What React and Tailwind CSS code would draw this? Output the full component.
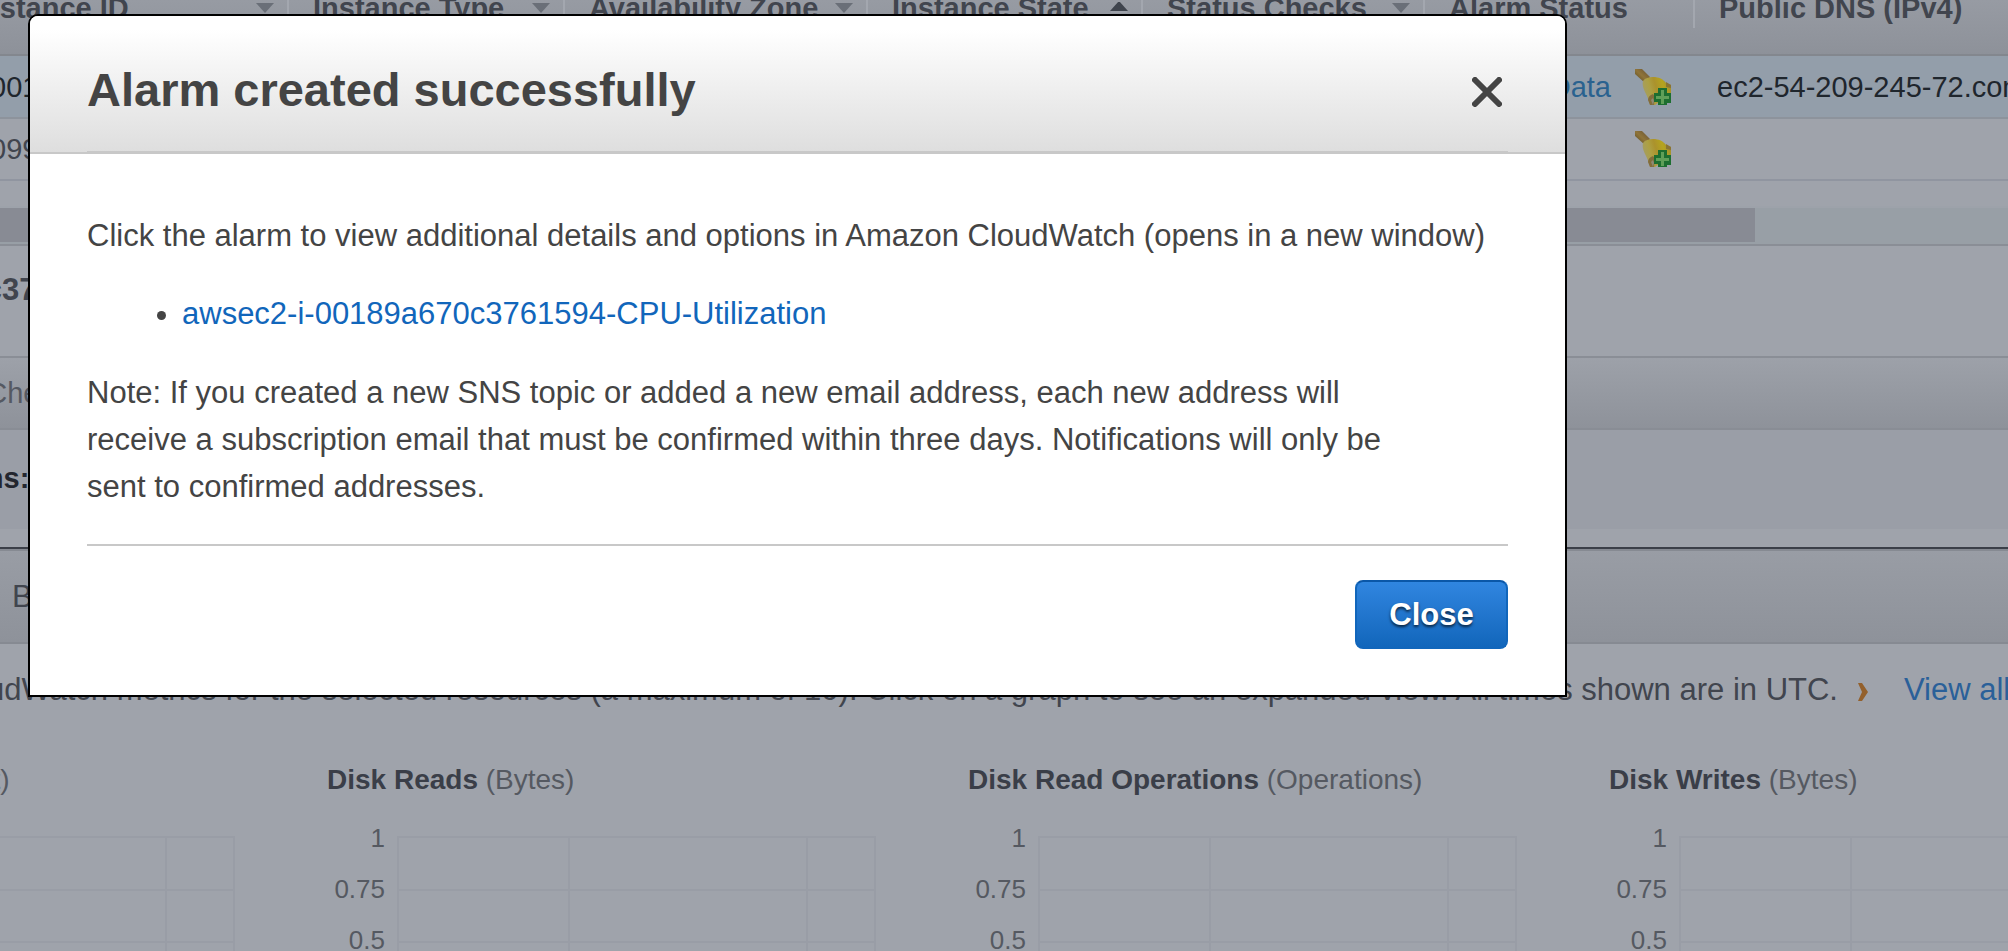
import React from "react";

const columns = [
  { name: "Instance ID", width: "w-[339px]", sort: "down" },
  { name: "Instance Type", width: "w-[276px]", sort: "down" },
  { name: "Availability Zone", width: "w-[303px]", sort: "down" },
  { name: "Instance State", width: "w-[275px]", sort: "up" },
  { name: "Status Checks", width: "w-[282px]", sort: "down" },
  { name: "Alarm Status", width: "w-[270px]", sort: null },
  { name: "Public DNS (IPv4)", width: "w-[560px]", sort: null },
];

const charts = [
  { name: "CPU Utilization", unit: "(Percent)" },
  { name: "Disk Reads", unit: "(Bytes)" },
  { name: "Disk Read Operations", unit: "(Operations)" },
  { name: "Disk Writes", unit: "(Bytes)" },
];

function SortArrow({ direction }) {
  if (direction === "up") {
    return (
      <svg viewBox="0 0 18 11" className="w-[18px] h-[11px]" aria-hidden="true">
        <path d="M0 9 9 -1l9 10z" fill="#3f444d" />
        <path d="M1 10h16" stroke="#a3a7af" strokeWidth="1" />
      </svg>
    );
  }
  return (
    <svg viewBox="0 0 18 11" className="w-[18px] h-[11px]" aria-hidden="true">
      <path d="M0 1h18L9 11z" fill="#6a6f78" />
    </svg>
  );
}

function AlarmBell() {
  return (
    <svg viewBox="0 0 36 36" className="size-9 shrink-0" aria-hidden="true">
      <defs>
        <linearGradient id="bell" x1="0" y1="0.6" x2="1" y2="0.3">
          <stop offset="0" stopColor="#a39d68" />
          <stop offset="0.3" stopColor="#ada042" />
          <stop offset="0.5" stopColor="#ab922c" />
          <stop offset="0.75" stopColor="#b5a41f" />
          <stop offset="1" stopColor="#a08c30" />
        </linearGradient>
        <linearGradient id="handle" x1="0" y1="1" x2="1" y2="0">
          <stop offset="0.3" stopColor="#75602f" />
          <stop offset="0.5" stopColor="#8f7439" />
          <stop offset="0.7" stopColor="#7d6537" />
        </linearGradient>
      </defs>
      <path d="M0 0h7l8 8-5 6L0 5z" fill="url(#handle)" />
      <path
        d="M8 12c2-3 6-4 10-4 6 0 10 2 13 6l5 2v8L20 36h-5c-1-5-3-9-5-13-2-4-3-8-2-11z"
        fill="url(#bell)"
      />
      <path d="M31 13l5 3v3l-5-1z" fill="#8a7433" />
      <path d="M13 31c0-3 2-5 5-6l2 3-1 8h-4z" fill="#836d3b" />
      <path d="M16 31l2-2 1 3-1 4z" fill="#8f8a74" />
      <path d="M23 19h9v5h4v10h-4v2h-9v-3h-4v-9h4z" fill="#1d6e30" />
      <path d="M26 21h3v6h5v3h-5v5h-3v-5h-5v-3h5z" fill="#5f9f58" />
    </svg>
  );
}

function InstanceTable() {
  return (
    <table className="-ml-[50px] w-[2305px] table-fixed border-separate border-spacing-0 text-[29px] text-[#41454e]">
      <thead>
        <tr className="h-14 bg-linear-to-b from-[#979ba3] to-[#8d9199]">
          {columns.map((c) => (
            <th
              key={c.name}
              scope="col"
              className={`${c.width} border-b-2 border-[#83878e] p-0 align-top text-left font-bold`}
            >
              <div className="flex h-7 items-start justify-between border-r-2 border-[#a3a7af] pl-6 pr-[13px] whitespace-nowrap">
                <span className="leading-4">{c.name}</span>
                {c.sort && (
                  <span className="pt-[2px] leading-none">
                    <SortArrow direction={c.sort} />
                  </span>
                )}
              </div>
            </th>
          ))}
        </tr>
      </thead>
      <tbody>
        <tr className="h-[63px] bg-[#939eaa] text-[#1f262d]">
          <td className="border-b-2 border-[#8d939c] pt-[2px] pb-0 pl-6">i-00189</td>
          <td className="border-b-2 border-[#8d939c] p-0" colSpan={4}></td>
          <td className="border-b-2 border-[#8d939c] p-0">
            <div className="flex items-center justify-end gap-6 pr-6">
              <a href="#no-data" className="pt-[2px] text-[#2a628f]">No Data</a>
              <AlarmBell />
            </div>
          </td>
          <td className="border-b-2 border-[#8d939c] pt-[2px] pb-0 pl-[22px]">
            ec2-54-209-245-72.compute-1
          </td>
        </tr>
        <tr className="h-[62px]">
          <td className="border-b-2 border-[#9095a0] pt-[2px] pb-0 pl-6">i-0996</td>
          <td className="border-b-2 border-[#9095a0] p-0" colSpan={4}></td>
          <td className="border-b-2 border-[#9095a0] p-0">
            <div className="flex items-center justify-end gap-6 pr-6">
              <AlarmBell />
            </div>
          </td>
          <td className="border-b-2 border-[#9095a0] p-0"></td>
        </tr>
      </tbody>
    </table>
  );
}

function ChartCard({ name, unit }) {
  return (
    <section className="w-[641px] shrink-0">
      <h3 className="text-[28px] leading-8 font-bold text-[#3a3e48] whitespace-nowrap">
        {name} <span className="font-normal text-[#555961]">{unit}</span>
      </h3>
      <div className="mt-[17px] flex">
        <div className="flex w-[58px] flex-col text-right text-[26px] leading-[51px] text-[#555961]">
          <span>1</span>
          <span>0.75</span>
          <span>0.5</span>
          <span>0.25</span>
        </div>
        <svg viewBox="0 0 480 200" className="mt-[21px] ml-[11px] w-[480px] h-[200px]" aria-hidden="true">
          <path
            d="M1 3H480M1 56H480M1 108H480M1 160H480M2 2V200M173 2V200M411 2V200M479 2V200"
            stroke="#999da6"
            strokeWidth="2"
            fill="none"
          />
        </svg>
      </div>
    </section>
  );
}

function Console() {
  return (
    <main className="h-screen overflow-hidden bg-[#9fa3ab] text-[#41454e]">
      <InstanceTable />
      <div className="mt-[25px] h-[38px] border-t-2 border-[#9da2aa] bg-[#989fa6]">
        <div className="h-[34px] w-[1755px] bg-[#888b94]"></div>
      </div>
      <div className="flex h-[114px] items-start border-y-2 border-[#8a8e96] pt-6">
        <h2 className="-ml-[334px] text-[31px] leading-10 font-bold whitespace-nowrap">
          Instance: i-00189a670c3761594
        </h2>
      </div>
      <nav className="flex h-[72px] items-center border-b-2 border-[#898d95] bg-linear-to-b from-[#9da1a9] to-[#8e929a] pt-[2px]">
        <a href="#status" className="-ml-[104px] text-[29px] text-[#555962] whitespace-nowrap">
          Status Checks
        </a>
      </nav>
      <div className="h-[99px] bg-[#9a9ea7] pt-7">
        <p className="-ml-[250px] text-[29px] leading-[40px] font-bold text-[#23262f] whitespace-nowrap">
          CloudWatch alarms:
        </p>
      </div>
      <div className="mt-[18px] flex h-[97px] items-center border-t-2 border-b-2 border-t-[#3b3f48] border-b-[#868a92] bg-linear-to-b from-[#999da5] to-[#8e929a] pt-1 pl-3 shadow-[inset_0_2px_0_#868a92]">
        <p className="text-[31px]">Basic monitoring</p>
      </div>
      <div className="-ml-[275px] flex items-center pt-[22px] text-[31px] leading-[47px] whitespace-nowrap">
        <p>
          Below are your CloudWatch metrics for the selected resources (a maximum of 10). Click on a
          graph to see an expanded view. All times shown are in UTC.
        </p>
        <svg viewBox="0 0 10 18" className="mt-1 ml-5 h-[18px] w-[10px] shrink-0" aria-hidden="true">
          <path d="M0 0h4l6 9-6 9H0l4-9z" fill="#93602c" />
        </svg>
        <a href="#metrics" className="ml-9 text-[#2a6099]">
          View all CloudWatch metrics
        </a>
      </div>
      <div className="-ml-[314px] flex pt-[51px]">
        {charts.map((c) => (
          <ChartCard key={c.name} name={c.name} unit={c.unit} />
        ))}
      </div>
    </main>
  );
}

function AlarmDialog() {
  return (
    <div className="fixed inset-0 flex items-start pt-[14px] pr-7 pl-7">
      <div
        role="dialog"
        aria-labelledby="dialog-title"
        className="w-full max-w-[1539px] overflow-hidden rounded-t-[10px] border-2 border-black bg-white text-[31px] leading-[47px] text-[#444]"
      >
        <header className="border-b-2 border-[#c8c8c8] bg-linear-to-b from-white from-10% to-[#dedede] px-[57px]">
          <div className="-mb-px flex h-[137px] items-center justify-between border-b-2 border-[#c8c8c8] pt-3 pr-[6px]">
            <h1 id="dialog-title" className="text-[47px] font-bold">
              Alarm created successfully
            </h1>
            <button type="button" aria-label="Close dialog" className="pt-1">
              <svg viewBox="0 0 30 30" className="size-[30px]" aria-hidden="true">
                <path
                  d="M3 3l24 24M27 3 3 27"
                  stroke="#444"
                  strokeWidth="6"
                  strokeLinecap="round"
                />
              </svg>
            </button>
          </div>
        </header>
        <div className="px-[57px] pt-[58px] pb-[46px]">
          <p>
            Click the alarm to view additional details and options in Amazon CloudWatch (opens in a
            new window)
          </p>
          <ul className="mt-[31px] mb-8 list-disc pl-[95px]">
            <li>
              <a href="#alarm" className="text-[#1166bb]">
                awsec2-i-00189a670c3761594-CPU-Utilization
              </a>
            </li>
          </ul>
          <p className="max-w-[1340px]">
            Note: If you created a new SNS topic or added a new email address, each new address will
            receive a subscription email that must be confirmed within three days. Notifications
            will only be sent to confirmed addresses.
          </p>
          <div className="mt-[34px] flex justify-end border-t-2 border-[#c8c8c8] pt-[34px]">
            <button
              type="button"
              className="h-[69px] w-[153px] rounded-lg border-2 border-[#1166bb] border-t-[#0a57a8] bg-linear-to-b from-[#3086e0] to-[#1166bb] text-[31px] font-bold text-white text-shadow-[0_2px_3px_rgba(0,0,0,0.7)]"
            >
              Close
            </button>
          </div>
        </div>
      </div>
    </div>
  );
}

export default function App() {
  return (
    <div className="font-['Liberation_Sans',Arial,sans-serif]">
      <Console />
      <AlarmDialog />
    </div>
  );
}
